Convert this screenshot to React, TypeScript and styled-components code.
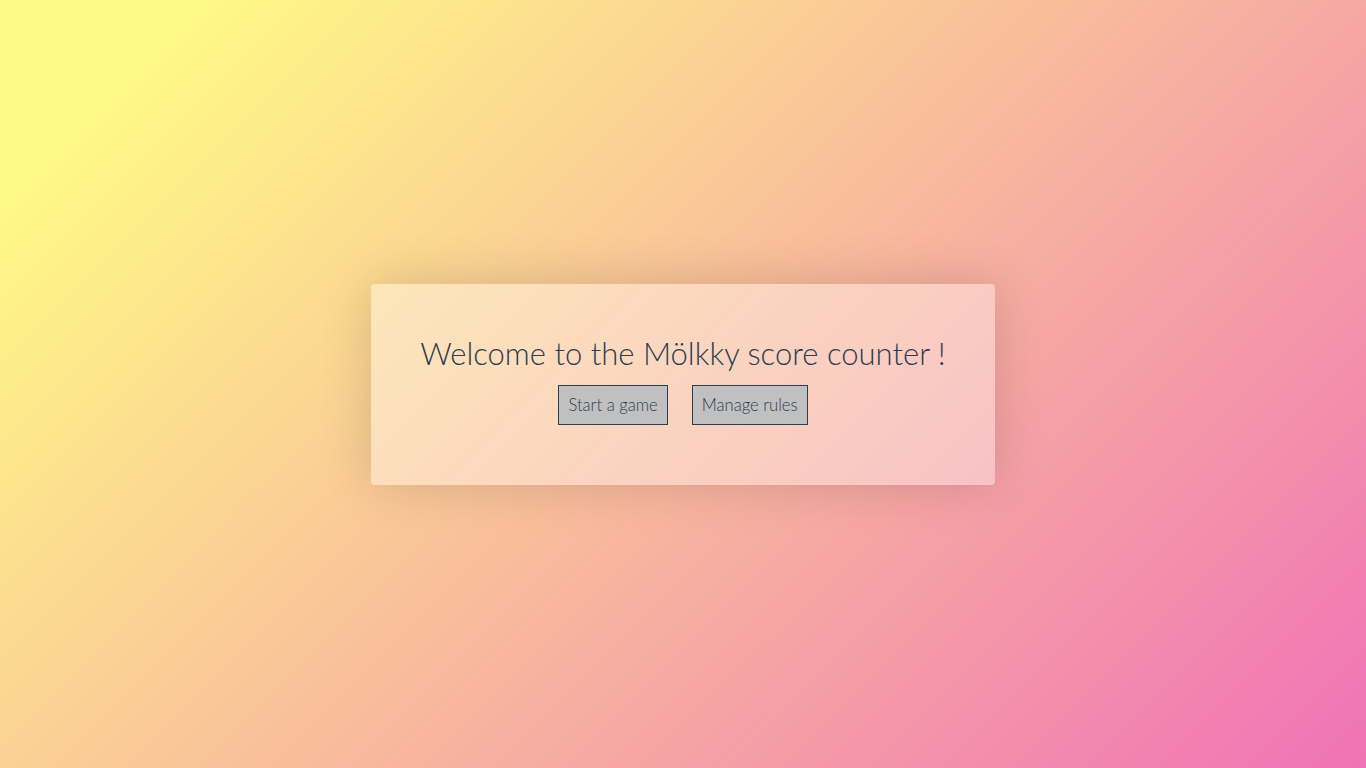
import React from "react";
import styled, { createGlobalStyle } from "styled-components";

const Global = createGlobalStyle`
  html, body { margin: 0; padding: 0; height: 100%; }
  body {
    font-family: Lato, "Noto Sans", Helvetica, Arial, sans-serif;
    color: #2c3e50;
  }
  #root { height: 100%; }
`;

const Page = styled.div`
  min-height: 100vh;
  display: flex;
  align-items: center;
  justify-content: center;
  background: linear-gradient(135deg, #fff886 10%, #f072b6 100%);
`;

const Card = styled.div`
  width: 624px;
  box-sizing: border-box;
  padding: 49px 40px 60px;
  background: rgba(255, 255, 255, 0.36);
  border-radius: 4px;
  box-shadow: 0 0 50px rgba(0, 0, 0, 0.15);
  display: flex;
  flex-direction: column;
  align-items: center;
`;

const Title = styled.h1`
  margin: 0 0 12px;
  font-size: 31px;
  font-weight: 300;
  line-height: 40px;
  color: #2c3e50;
  white-space: nowrap;
`;

const Actions = styled.div`
  display: flex;
  gap: 24px;
`;

const Button = styled.button`
  height: 40px;
  padding: 0 9px;
  background: #c0c0c0;
  border: 1px solid #2c3e50;
  border-radius: 0;
  font-family: inherit;
  font-size: 16.6px;
  font-weight: 300;
  color: #2c3e50;
  cursor: pointer;
`;

export default function App() {
  return (
    <>
      <Global />
      <Page>
        <Card>
          <Title>Welcome to the Mölkky score counter !</Title>
          <Actions>
            <Button>Start a game</Button>
            <Button>Manage rules</Button>
          </Actions>
        </Card>
      </Page>
    </>
  );
}
